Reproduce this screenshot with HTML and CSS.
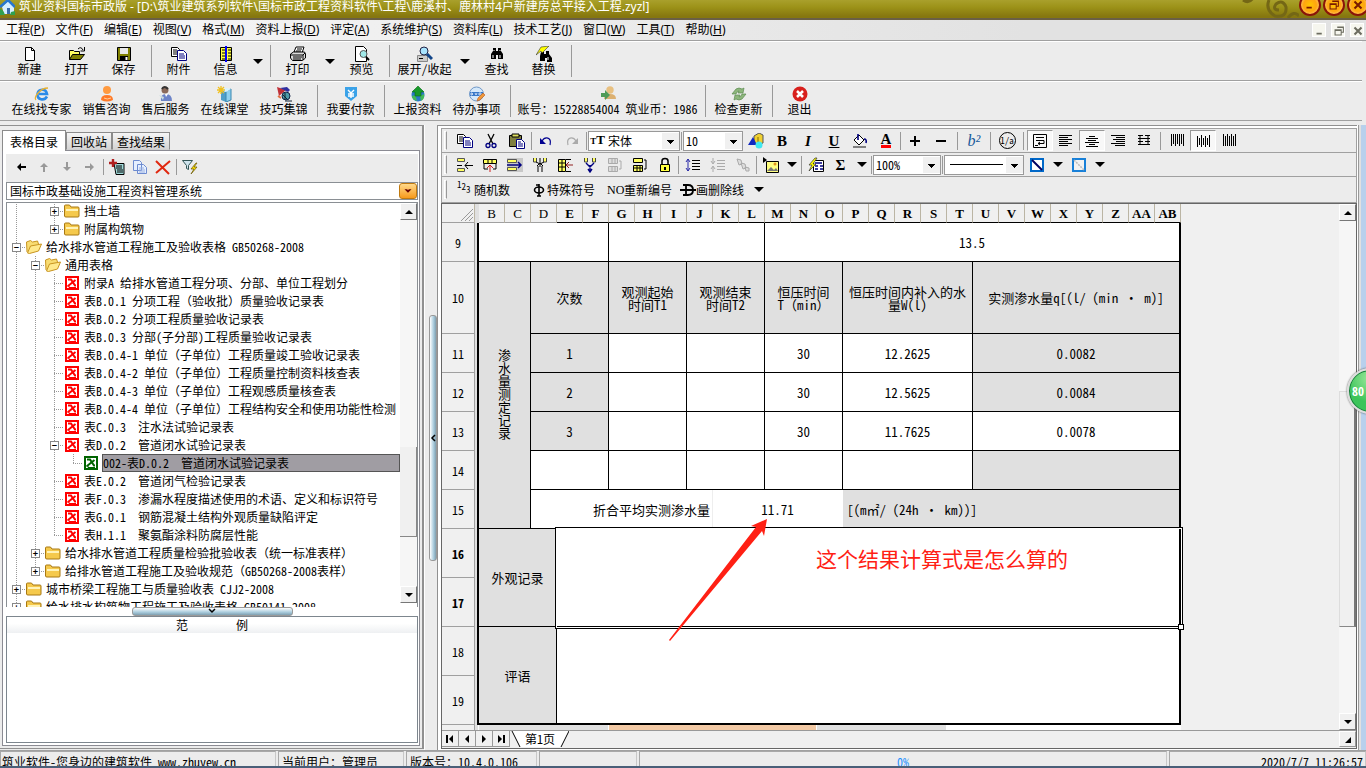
FILE: index.html
```html
<!DOCTYPE html>
<html lang="zh-CN">
<head>
<meta charset="utf-8">
<title>筑业资料国标市政版</title>
<link rel="stylesheet" href="styles.css">
</head>
<body>
<svg class="defs" aria-hidden="true">
  <symbol id="doc" viewBox="0 0 16 16"><path d="M3.5 1.5h6l3 3v10h-9z" fill="#fff" stroke="#000"/><path d="M9.5 1.5v3h3" fill="none" stroke="#000"/></symbol>
  <symbol id="open" viewBox="0 0 16 16"><path d="M.5 13.500V4.500h4l1 1h5v3" fill="#ffff60" stroke="#000"/><path d="M.5 13.500l3-5h12l-4 5z" fill="#808000" stroke="#000"/><path d="M9 3q3-3 5 1M15.500 1v4h-4" fill="none" stroke="#000"/></symbol>
  <symbol id="save" viewBox="0 0 16 16"><path d="M1.500 1.500h13v13h-13z" fill="#808000" stroke="#000"/><path d="M4 2h8v6H4z" fill="#e8e8e8"/><path d="M4 10h8v5H4z" fill="#000"/><path d="M9.500 11h2v3h-2z" fill="#fff"/></symbol>
  <symbol id="copy" viewBox="0 0 16 16"><path d="M.5 1.500h6l2 2v7h-8z" fill="#fff" stroke="#000"/><path d="M2 4h4M2 6h4M2 8h4" stroke="#000"/><path d="M6.500 4.500h6l3 3v7h-9z" fill="#fff" stroke="#000080"/><path d="M8 8h5M8 10h6M8 12h6" stroke="#000080"/></symbol>
  <symbol id="book" viewBox="0 0 16 16"><path d="M2.500 1.500h11v13h-11z" fill="#ffff40" stroke="#000"/><path d="M4 4h3M4 7h3M4 10h3M4 13h3M10 4h3M10 7h3M10 10h3M10 13h3" stroke="#000"/><path d="M7 0h2v16H7z" fill="#00f"/></symbol>
  <symbol id="print" viewBox="0 0 16 16"><path d="M4 6l2-5h8l-2 6z" fill="#fff" stroke="#000"/><path d="M7 3h5M6 5h5" stroke="#000"/><path d="M.5 8l3-2h11l1 2v4l-3 2.500h-10L.5 12z" fill="#ddd" stroke="#000"/><path d="M1 9h12M3 11h9M3 13h8M13 9l2-2M13 14V9" stroke="#000" fill="none"/></symbol>
  <symbol id="preview" viewBox="0 0 16 16"><path d="M1.500.5h8l3 3v12h-11z" fill="#fff" stroke="#000"/><circle cx="9.500" cy="8" r="3.500" fill="#a0e8e8" stroke="#555"/><path d="M12 11l3 3" stroke="#000" stroke-width="2"/></symbol>
  <symbol id="zoom" viewBox="0 0 16 16"><path d="M.5 9.500h10v6H.5z" fill="#ccc" stroke="#888"/><path d="M2 12.500h4" stroke="#000"/><circle cx="7" cy="5" r="4" fill="#a8e4ff" stroke="#224"/><path d="M10 8l5 5" stroke="#114488" stroke-width="3"/></symbol>
  <symbol id="find" viewBox="0 0 16 16"><path d="M4 2h3v3h2V2h3v3l2 3v5H9V9H7v4H2V8l2-3z"/><path d="M4 9v3M11 9v3M5 4v1M11 4v1" stroke="#fff"/></symbol>
  <symbol id="swap" viewBox="0 0 16 16"><path d="M5 6h3v2h2V5h3v3l3 4v4h-5v-4H9v3H4v-5z"/><path d="M13 0L5 1 0 9l5-4 1 2z" fill="#ffff00" stroke="#333" stroke-width=".6"/><path d="M12 11v3" stroke="#fff"/></symbol>
  <symbol id="ie" viewBox="0 0 16 16"><path d="M13 10.500c-3 5-10 3-9.500-2.500S12 2 13 8H5" fill="none" stroke="#2b8be8" stroke-width="2.600"/><path d="M2 14c-3-2 4-12 12-12" fill="none" stroke="#e8b030" stroke-width="1.300"/></symbol>
  <symbol id="person" viewBox="0 0 16 16"><circle cx="8" cy="4" r="4" fill="#ff9a40"/><path d="M2 14q0-5 6-5t6 5q-6 3-12 0z" fill="#ff7a28"/><path d="M5 12q3 2 7 0" stroke="#ffd0a0" fill="none"/></symbol>
  <symbol id="service" viewBox="0 0 16 16"><circle cx="7" cy="4" r="3.500" fill="#8b6a5a"/><path d="M4 3q2-4 6 0" stroke="#333" stroke-width="2" fill="none"/><path d="M3 15q-1-7 5-7t6 7z" fill="#6d84c8"/><path d="M1 9l5 2-1 3" fill="#cdd"/><path d="M7 8l1 3 2-3z" fill="#fff"/></symbol>
  <symbol id="class" viewBox="0 0 16 16"><path d="M4 4l5 2v10l-5-2z" fill="#4f9fc8"/><path d="M9 5l5-2v11l-5 2z" fill="#8fd0ee" stroke="#3887b0"/><path d="M4 4l5-2 5 1-5 3z" fill="#d8f3ff"/><path d="M4 0v8M0 4h8M1 1l6 6M7 1L1 7" stroke="#f0c020" stroke-width="1.300"/></symbol>
  <symbol id="tips" viewBox="0 0 16 16"><path d="M1 1l9 3-7 6z" fill="#c03038"/><path d="M4 2l8 4 2-2-3-3z" fill="#3030a0"/><circle cx="10" cy="10" r="4" fill="#4b9ba8" stroke="#124"/><path d="M7 9l4 4M9 7v7M9 15h7" stroke="#123"/><path d="M2 10l3 2" stroke="#e07040" stroke-width="2"/></symbol>
  <symbol id="pay" viewBox="0 0 16 16"><path d="M2 1h12v9l-6 5-6-5z" fill="#3aa2e8"/><path d="M5 4l3 3 3-3M8 7v5M5 8h6M5 10h6" stroke="#fff" stroke-width="1.400" fill="none"/></symbol>
  <symbol id="report" viewBox="0 0 16 16"><circle cx="8" cy="9" r="6.500" fill="#2877c8"/><path d="M2 10q4-2 5 5-5-1-5-5zM10 10l4-2q1 5-3 7z" fill="#40b858"/><path d="M8 0l6 6h-3v4H5V6H2z" fill="#18992c" stroke="#087010" stroke-width=".6"/></symbol>
  <symbol id="todo" viewBox="0 0 16 16"><circle cx="7.500" cy="8" r="7" fill="#d4e8fa" stroke="#7098c8"/><path d="M1 6h13v4H1z" fill="#3878c8"/><path d="M2 7v2h1l1-1-1-1zM6 7l1 2 1-2M10 7h2v2h-2z" stroke="#fff" fill="none" stroke-width=".7"/><path d="M8 15l1-3 5-5 2 2-5 5z" fill="#f09838" stroke="#b85a20" stroke-width=".6"/></symbol>
  <symbol id="account" viewBox="0 0 16 16"><circle cx="10" cy="4" r="3.700" fill="#e8c080"/><path d="M4 13q0-5 6-5t6 5z" fill="#dcb070"/><path d="M1 7h4V4l5 5-5 5v-3H1z" fill="#4f9b58"/></symbol>
  <symbol id="update" viewBox="0 0 16 16"><path d="M1 8l4-5q3-2 6 0l2-1-1 5H7l1-2q-2 0-3 3zM15 8l-4 5q-3 2-6 0l-2 1 1-5h5l-1 2q2 0 3-3z" fill="#8db67c" stroke="#5c8b50" stroke-width=".7"/></symbol>
  <symbol id="exit" viewBox="0 0 16 16"><circle cx="8" cy="8" r="7.500" fill="#d8201c"/><path d="M5 5l6 6M11 5l-6 6" stroke="#fff" stroke-width="2.500"/></symbol>
  <symbol id="folder" viewBox="0 0 16 16"><path d="M.5 13V3q0-1 1-1h4l1.500 2H14q1 0 1 1v8q0 1-1 1H2q-1.500 0-1.500-1z" fill="#f5c94c" stroke="#a87813"/><path d="M2 7h12" stroke="#fff3b8" stroke-width="2"/></symbol>
  <symbol id="fopen" viewBox="0 0 16 16"><path d="M1 13L.5 3l4-1.500 2 1.500 5-1 1 3" fill="#f8dc72" stroke="#c89420"/><path d="M1.500 14l3-7L15.500 5l-3 7-9 2.500z" fill="#ffe98c" stroke="#c89420"/></symbol>
  <symbol id="xred" viewBox="0 0 14 14"><path d="M0 0h14v14H0z" fill="#f00"/><path d="M2 2h10v10H2z" fill="#fff"/><path d="M3 3.500h3l4 6h1M10.500 4L3 10" stroke="#f00" stroke-width="2" fill="none"/><path d="M2 10h2v1.500h7" stroke="#f00" fill="none"/></symbol>
  <symbol id="xgreen" viewBox="0 0 14 14"><path d="M0 0h14v14H0z" fill="#006400"/><path d="M2 2h10v10H2z" fill="#fff"/><path d="M3 3.500h3l4 6h1M10.500 4L3 10" stroke="#006400" stroke-width="2" fill="none"/><path d="M2 10h2v1.500h7" stroke="#006400" fill="none"/></symbol>
  <symbol id="arrow" viewBox="0 0 16 16"><path d="M4 8l4-4v3h5v2H8v3z"/></symbol>
  <symbol id="addrow" viewBox="0 0 16 16"><path d="M5 4.500h10v11H7z" fill="#9fd8d8" stroke="#000"/><path d="M7 7h6M7 9h6M8 11h6M8 13h6" stroke="#000"/><path d="M4 0v8M0 4h8" stroke="#b02020" stroke-width="2.400"/></symbol>
  <symbol id="pages" viewBox="0 0 16 16"><path d="M1.500 1.500h6l2 2v8h-8zM5.500 5.500h6l3 3v6h-9z" fill="#e5efff" stroke="#6d8bd0"/><path d="M7 9h5M7 11h6M7 13h6" stroke="#9ab0e0"/></symbol>
  <symbol id="del" viewBox="0 0 16 16"><path d="M1 2l13 13M15 2L1 14" stroke="#e02810" stroke-width="2"/></symbol>
  <symbol id="filter" viewBox="0 0 16 16"><path d="M.5 1.500h10l-4 5v4l-2-1v-3z" fill="#cfe4ee" stroke="#355"/><path d="M14 4l-5 6h3l-3 5 6-7h-3l3-4z" fill="#ffe000" stroke="#665500" stroke-width=".7"/></symbol>
  <symbol id="cut" viewBox="0 0 16 16"><path d="M5 1l5 10M11 1L6 11" stroke="#000" stroke-width="1.300"/><circle cx="5" cy="12.500" r="2" fill="none" stroke="#000080" stroke-width="1.300"/><circle cx="11" cy="12.500" r="2" fill="none" stroke="#000080" stroke-width="1.300"/></symbol>
  <symbol id="paste" viewBox="0 0 16 16"><path d="M.5 2.500h12v11H.5z" fill="#808040" stroke="#000"/><path d="M3 1h7v3H3z" fill="#e0e060" stroke="#000"/><path d="M7.500 6.500h5l3 3v6h-8z" fill="#fff" stroke="#000080"/><path d="M9 9h3M9 11h5M9 13h5" stroke="#000080"/></symbol>
  <symbol id="undo" viewBox="0 0 16 16"><path d="M4 8c3-5 10-4 8 4" fill="none" stroke="#000090" stroke-width="1.200"/><path d="M2 5v6h6z" fill="#000090"/></symbol>
  <symbol id="redo" viewBox="0 0 16 16"><path d="M12 8C9 3 2 4 4 12" fill="none" stroke="#aaa" stroke-width="1.200"/><path d="M14 5v6H8z" fill="#aaa"/></symbol>
  <symbol id="shapes" viewBox="0 0 16 16"><path d="M6 3l5-3 4 2v8l-5 2-4-2z" fill="#f0d030" stroke="#555"/><path d="M10 4v8" stroke="#877000"/><path d="M0 12l5-8 4 8z" fill="#1028c0"/><circle cx="11" cy="12" r="3.500" fill="#40e8f0"/></symbol>
  <symbol id="fill" viewBox="0 0 16 16"><path d="M2 7l5-5 5 5-5 5z" fill="#fff" stroke="#000"/><path d="M6 7V1M12 6q3 0 2 4" stroke="#000080" stroke-width="1.600" fill="none"/><path d="M1 13h13v2H1z" fill="#808080"/></symbol>
  <symbol id="plus" viewBox="0 0 16 16"><path d="M8 3v10M3 8h10" stroke="#000" stroke-width="2"/></symbol>
  <symbol id="minus" viewBox="0 0 16 16"><path d="M3 8h10" stroke="#000" stroke-width="2"/></symbol>
  <symbol id="wrap" viewBox="0 0 16 16"><path d="M1.500 1.500h13v13h-13z" fill="none" stroke="#000"/><path d="M4 4.500h8M4 7.500h8v3H6M8 9l-2 1.500L8 12M3 12.500h3" fill="none" stroke="#000"/></symbol>
  <symbol id="al" viewBox="0 0 16 16"><path d="M1 2.500h13M1 4.500h9M1 6.500h13M1 8.500h9M1 10.500h13M1 12.500h9" stroke="#000"/></symbol>
  <symbol id="ac" viewBox="0 0 16 16"><path d="M5 3.500h6M2 5.500h12M4 7.500h8M1 9.500h14M5 11.500h6M2 13.500h12" stroke="#000"/></symbol>
  <symbol id="ar" viewBox="0 0 16 16"><path d="M1 2.500h14M6 4.500h9M3 6.500h12M6 8.500h9M1 10.500h14M5 12.500h10" stroke="#000"/></symbol>
  <symbol id="aj" viewBox="0 0 16 16"><path d="M2 2.500h5M9 2.500h5M2 5.500h12M2 8.500h5M9 8.500h5M2 11.500h12M4 3v8M12 3v8" stroke="#000"/></symbol>
  <symbol id="vt" viewBox="0 0 16 16"><path d="M2.500 1v12M4.500 1v10M6.500 1v12M8.500 1v10M10.500 1v12M12.500 1v10M14.500 1v12" stroke="#000"/></symbol>
  <symbol id="vm" viewBox="0 0 16 16"><path d="M2.500 3v11M4.500 5v7M6.500 2v12M8.500 5v7M10.500 3v11M12.500 5v7M14.500 2v12" stroke="#000"/></symbol>
  <symbol id="vb" viewBox="0 0 16 16"><path d="M2.500 1v12M4.500 3v10M6.500 1v12M8.500 3v10M10.500 1v12M12.500 3v10M14.500 1v12" stroke="#000"/></symbol>
  <symbol id="insrow" viewBox="0 0 16 16"><path d="M.5 1.500h7v3h-7zM.5 11.500h7v3h-7z" fill="#ffff60" stroke="#555"/><path d="M0 8.500h5M8 8.500h8M11 5L8 8.500 11 12" stroke="#000" fill="none"/></symbol>
  <symbol id="inscol" viewBox="0 0 16 16"><path d="M1.500 2.500h13v4h-13z" fill="#ffff60" stroke="#000"/><path d="M6 3v3M10 3v3M2 7v5h4M14 7v5h-3" stroke="#000" fill="none"/><path d="M8 8v7M5 11l3-3 3 3" stroke="#d02020" fill="none"/></symbol>
  <symbol id="approw" viewBox="0 0 16 16"><path d="M0 1h16v14H0z" fill="#c8c8c8"/><path d="M.5 2.500h9v3h-9zM.5 10.500h9v3h-9z" fill="#ffff60" stroke="#555"/><path d="M0 8h13M11 5l3 3-3 3" stroke="#000080" stroke-width="1.500" fill="none"/></symbol>
  <symbol id="split" viewBox="0 0 16 16"><path d="M1.500 1v4h3V1M11.500 1v4h3V1" fill="#ffff60" stroke="#444"/><path d="M8 1v9M4 5l4 2 4-2M5 9l3-3 3 3M6 9v6M10 9v6" stroke="#000" fill="none"/></symbol>
  <symbol id="delrow" viewBox="0 0 16 16"><path d="M1.500 2.500h7v12h-7z" fill="#ffff60" stroke="#000"/><path d="M5 3v11M2 6h6M2 10h6M9 2.500h5M9 14.500h5" stroke="#000"/><path d="M9 8h7M12 5L9 8l3 3" stroke="#902020" fill="none"/></symbol>
  <symbol id="merge" viewBox="0 0 16 16"><path d="M2.500 1v4h3V1M10.500 1v4h3V1" fill="#ffff60" stroke="#444"/><path d="M4 6l4 4 4-4M8 8v7M6 12l2 3 2-3" stroke="#000080" fill="none" stroke-width="1.400"/></symbol>
  <symbol id="gridg" viewBox="0 0 16 16"><path d="M1.500 1.500h9v5h-9zM1.500 9.500h9v5h-9z" fill="#ddd" stroke="#aaa"/><path d="M5 2v4M8 2v4M5 10v4M8 10v4M12 4h2v8h-2" stroke="#aaa" fill="none"/></symbol>
  <symbol id="gridy" viewBox="0 0 16 16"><path d="M1.500 1.500h9v4h-9zM1.500 8.500h9v6h-9z" fill="#ffff60" stroke="#000"/><path d="M5 9v5M8 9v5M2 11h9M12 3h2v9h-2" stroke="#000" fill="none"/></symbol>
  <symbol id="lock" viewBox="0 0 16 16"><path d="M5 7V4q0-2.500 3-2.500T11 4v3" fill="none" stroke="#000" stroke-width="1.500"/><path d="M3.500 7.500h9v7h-9z" fill="#ffff40" stroke="#000"/><path d="M8 10v3" stroke="#000" stroke-width="2"/></symbol>
  <symbol id="linesp" viewBox="0 0 16 16"><path d="M7 3.500h8M7 6.500h8M7 9.500h8M7 12.500h8" stroke="#000"/><path d="M3 2v12M1 5l2-3 2 3M1 11l2 3 2-3" stroke="#2828a8" fill="none"/></symbol>
  <symbol id="linesg" viewBox="0 0 16 16"><path d="M7 3.500h8M7 6.500h8M7 9.500h8M7 12.500h8M3 1v5M1 4l2 3 2-3M3 15v-5M1 12l2-3 2 3" stroke="#aaa" fill="none"/></symbol>
  <symbol id="link" viewBox="0 0 16 16"><path d="M2 2l4 1 1 4-3 1zM6 6l4 1 1 4-3 1zM10 10l4 1v3h-3z" fill="#ddd" stroke="#aaa"/></symbol>
  <symbol id="image" viewBox="0 0 16 16"><path d="M3.500 4.500h12v11h-12z" fill="#ffff80" stroke="#000"/><path d="M4 14l4-4 3 3 2-2 2 3z" fill="#777"/><circle cx="12" cy="7" r="1.500" fill="#e09020"/><path d="M0 0l4 3-4 3z"/></symbol>
  <symbol id="calc" viewBox="0 0 16 16"><path d="M5.500 3.500h10v11h-10z" fill="#fff" stroke="#000"/><path d="M7 6h7M7 9h3M12 9h3M7 12h3M12 12h3" stroke="#000080" stroke-width="1.500"/><path d="M7 1L1 8h3l-3 6 7-7H5l4-6z" fill="#ff0" stroke="#333" stroke-width=".7"/></symbol>
  <symbol id="bord" viewBox="0 0 16 16"><path d="M2 2h12v12H2z" fill="#fff" stroke="#0068c8" stroke-width="2"/><path d="M3 3l10 10" stroke="#000060" stroke-width="2"/></symbol>
  <symbol id="bordl" viewBox="0 0 16 16"><path d="M2 2h12v12H2z" fill="#f2f2f2" stroke="#1880d8" stroke-width="2"/><path d="M3 3l10 10" stroke="#bbb" stroke-width="1.500" stroke-dasharray="2 1"/></symbol>
  <symbol id="spec" viewBox="0 0 16 16"><ellipse cx="8" cy="8" rx="4.500" ry="3" fill="none" stroke="#000" stroke-width="1.600"/><path d="M8 2v12M5 3h3M6 14h4" stroke="#000" stroke-width="1.600"/></symbol>
  <symbol id="strike" viewBox="0 0 16 16"><path d="M3 3h5q5 0 5 5t-5 5H3M6 3v10M0 8h16" fill="none" stroke="#000" stroke-width="1.800"/></symbol>
  <symbol id="wmin" viewBox="0 0 16 16"><path d="M4 11h6" stroke="currentColor" stroke-width="2"/></symbol>
  <symbol id="wres" viewBox="0 0 16 16"><path d="M3.500 6.500h7v6h-7zM6 3.500h7v6h-2M3 7.500h8M6 4h7" fill="none" stroke="currentColor" stroke-width="1.200"/></symbol>
  <symbol id="wclose" viewBox="0 0 16 16"><path d="M4 4l8 8M12 4l-8 8" stroke="currentColor" stroke-width="2.400"/></symbol>
</svg>

<header class="title">
  <svg class="logo" viewBox="0 0 16 16"><path d="M3 7l6-6 6 6v7H5z" fill="#d8f0ff"/><path d="M1 7l8-7 7 7" fill="none" stroke="#2878d0" stroke-width="2.500"/><path d="M8 8h3v6H8z" fill="#3a6ca8"/><path d="M0 9q4 0 6 6H0zM12 12l4-1v4h-5z" fill="#30a050"/></svg>
  <h1>筑业资料国标市政版 - [D:\筑业建筑系列软件\国标市政工程资料软件\工程\鹿溪村、鹿林村4户新建房总平接入工程.zyzl]</h1>
  <svg class="curl" viewBox="0 0 60 20"><path d="M4 0q6 4 10-2M30 0q-4 10 6 16q12 2 11-9q-3-8-10-3q-4 6 3 6M49 18q6-8 11-2" fill="none" stroke="#746715" stroke-width="3"/></svg>
  <div class="orbs"><button aria-label="最小化"><svg><use href="#wmin"/></svg></button><button aria-label="还原"><svg><use href="#wres"/></svg></button><button aria-label="关闭"><svg><use href="#wclose"/></svg></button></div>
</header>

<nav class="menu">
  <button>工程(<u>P</u>)</button><button>文件(<u>F</u>)</button><button>编辑(<u>E</u>)</button><button>视图(<u>V</u>)</button><button>格式(<u>M</u>)</button><button>资料上报(<u>D</u>)</button><button>评定(<u>A</u>)</button><button>系统维护(<u>S</u>)</button><button>资料库(<u>L</u>)</button><button>技术工艺(<u>J</u>)</button><button>窗口(<u>W</u>)</button><button>工具(<u>T</u>)</button><button>帮助(<u>H</u>)</button>
  <div class="mdi"><button aria-label="最小化窗口"><svg><use href="#wmin"/></svg></button><button aria-label="还原窗口"><svg><use href="#wres"/></svg></button><button aria-label="关闭窗口"><svg><use href="#wclose"/></svg></button></div>
</nav>

<div class="bar">
  <button class="big"><svg><use href="#doc"/></svg>新建</button><button class="big"><svg><use href="#open"/></svg>打开</button><button class="big"><svg><use href="#save"/></svg>保存</button><i class="sep"></i>
  <button class="big"><svg><use href="#copy"/></svg>附件</button><button class="big"><svg><use href="#book"/></svg>信息</button><button class="drop" aria-label="信息选项"></button><i class="sep"></i>
  <button class="big"><svg><use href="#print"/></svg>打印</button><button class="drop" aria-label="打印选项"></button><button class="big"><svg><use href="#preview"/></svg>预览</button><i class="sep"></i>
  <button class="big mid"><svg><use href="#zoom"/></svg>展开/收起</button><button class="drop" aria-label="展开选项"></button><button class="big"><svg><use href="#find"/></svg>查找</button><button class="big"><svg><use href="#swap"/></svg>替换</button><i class="sep"></i>
</div>
<div class="bar two">
  <button class="big five"><svg><use href="#ie"/></svg>在线找专家</button><button class="big four"><svg><use href="#person"/></svg>销售咨询</button><button class="big four"><svg><use href="#service"/></svg>售后服务</button><button class="big four"><svg><use href="#class"/></svg>在线课堂</button><button class="big four"><svg><use href="#tips"/></svg>技巧集锦</button><i class="sep"></i>
  <button class="big four"><svg><use href="#pay"/></svg>我要付款</button><i class="sep"></i>
  <button class="big four"><svg><use href="#report"/></svg>上报资料</button><button class="big four"><svg><use href="#todo"/></svg>待办事项</button><i class="sep"></i>
  <button class="big acct"><svg><use href="#account"/></svg>账号：15228854004 筑业币：1986</button><i class="sep"></i>
  <button class="big four"><svg><use href="#update"/></svg>检查更新</button><i class="sep"></i>
  <button class="big"><svg><use href="#exit"/></svg>退出</button>
</div>

<main class="work">
  <aside class="left">
    <div class="tabs"><button class="on">表格目录</button><button>回收站</button><button>查找结果</button></div>
    <div class="pane">
      <div class="tools">
        <button aria-label="后退"><svg><use href="#arrow"/></svg></button><button class="dim up" aria-label="上移"><svg><use href="#arrow"/></svg></button><button class="dim down" aria-label="下移"><svg><use href="#arrow"/></svg></button><button class="dim fwd" aria-label="前进"><svg><use href="#arrow"/></svg></button><i class="sep"></i>
        <button aria-label="添加"><svg><use href="#addrow"/></svg></button><button aria-label="复制表格"><svg><use href="#pages"/></svg></button><button aria-label="删除"><svg><use href="#del"/></svg></button><i class="sep"></i><button aria-label="筛选"><svg><use href="#filter"/></svg></button>
      </div>
      <div class="system"><select aria-label="资料系统"><option>国标市政基础设施工程资料管理系统</option></select><span class="chev"><svg viewBox="0 0 16 16"><path d="M4 6h3l1 1 1-1h3l-4 4z" fill="#600"/></svg></span></div>
      <div class="treebox">
        <ul class="tree">
          <li><i class="v"></i><i></i><i class="t"><b>+</b></i><svg><use href="#folder"/></svg><span>挡土墙</span></li>
          <li><i class="v"></i><i></i><i class="l"><b>+</b></i><svg><use href="#folder"/></svg><span>附属构筑物</span></li>
          <li><i class="t"><b>−</b></i><svg><use href="#fopen"/></svg><span>给水排水管道工程施工及验收表格 GB50268-2008</span></li>
          <li><i class="v"></i><i class="t"><b>−</b></i><svg><use href="#fopen"/></svg><span>通用表格</span></li>
          <li><i class="v"></i><i class="v"></i><i class="t"></i><svg class="x"><use href="#xred"/></svg><span>附录A 给排水管道工程分项、分部、单位工程划分</span></li>
          <li><i class="v"></i><i class="v"></i><i class="t"></i><svg class="x"><use href="#xred"/></svg><span>表B.0.1 分项工程<em>（</em>验收批<em>）</em>质量验收记录表</span></li>
          <li><i class="v"></i><i class="v"></i><i class="t"></i><svg class="x"><use href="#xred"/></svg><span>表B.0.2 分项工程质量验收记录表</span></li>
          <li><i class="v"></i><i class="v"></i><i class="t"></i><svg class="x"><use href="#xred"/></svg><span>表B.0.3 分部(子分部)工程质量验收记录表</span></li>
          <li><i class="v"></i><i class="v"></i><i class="t"></i><svg class="x"><use href="#xred"/></svg><span>表B.0.4-1 单位<em>（</em>子单位<em>）</em>工程质量竣工验收记录表</span></li>
          <li><i class="v"></i><i class="v"></i><i class="t"></i><svg class="x"><use href="#xred"/></svg><span>表B.0.4-2 单位<em>（</em>子单位<em>）</em>工程质量控制资料核查表</span></li>
          <li><i class="v"></i><i class="v"></i><i class="t"></i><svg class="x"><use href="#xred"/></svg><span>表B.0.4-3 单位<em>（</em>子单位<em>）</em>工程观感质量核查表</span></li>
          <li><i class="v"></i><i class="v"></i><i class="t"></i><svg class="x"><use href="#xred"/></svg><span>表B.0.4-4 单位<em>（</em>子单位<em>）</em>工程结构安全和使用功能性检测</span></li>
          <li><i class="v"></i><i class="v"></i><i class="t"></i><svg class="x"><use href="#xred"/></svg><span>表C.0.3<em>　</em>注水法试验记录表</span></li>
          <li><i class="v"></i><i class="v"></i><i class="t"><b>−</b></i><svg class="x"><use href="#xred"/></svg><span>表D.0.2<em>　</em>管道闭水试验记录表</span></li>
          <li class="sel"><i class="v"></i><i class="v"></i><i class="v"></i><i class="l"></i><svg class="x"><use href="#xgreen"/></svg><span>002-表D.0.2<em>　</em>管道闭水试验记录表</span></li>
          <li><i class="v"></i><i class="v"></i><i class="t"></i><svg class="x"><use href="#xred"/></svg><span>表E.0.2<em>　</em>管道闭气检验记录表</span></li>
          <li><i class="v"></i><i class="v"></i><i class="t"></i><svg class="x"><use href="#xred"/></svg><span>表F.0.3<em>　</em>渗漏水程度描述使用的术语、定义和标识符号</span></li>
          <li><i class="v"></i><i class="v"></i><i class="t"></i><svg class="x"><use href="#xred"/></svg><span>表G.0.1<em>　</em>钢筋混凝土结构外观质量缺陷评定</span></li>
          <li><i class="v"></i><i class="v"></i><i class="l"></i><svg class="x"><use href="#xred"/></svg><span>表H.1.1<em>　</em>聚氨酯涂料防腐层性能</span></li>
          <li><i class="v"></i><i class="t"><b>+</b></i><svg><use href="#folder"/></svg><span>给水排水管道工程质量检验批验收表<em>（</em>统一标准表样<em>）</em></span></li>
          <li><i class="v"></i><i class="l"><b>+</b></i><svg><use href="#folder"/></svg><span>给排水管道工程施工及验收规范<em>（</em>GB50268-2008表样<em>）</em></span></li>
          <li><i class="t"><b>+</b></i><svg><use href="#folder"/></svg><span>城市桥梁工程施工与质量验收表 CJJ2-2008</span></li>
          <li><i class="t"><b>+</b></i><svg><use href="#folder"/></svg><span>给水排水构筑物工程施工及验收表格 GB50141-2008</span></li>
        </ul>
        <div class="scroll"><button class="su" aria-label="向上滚动"></button><i class="before"></i><i class="thumb"></i><i class="after"></i><button class="sd" aria-label="向下滚动"></button></div>
      </div>
      <div class="hsplit"><i><svg viewBox="0 0 8 6"><path d="M1 1l3 3 3-3" fill="none" stroke="#000" stroke-width="1.500"/></svg></i></div>
      <section class="example"><h2><span>范</span><span>例</span></h2></section>
    </div>
  </aside>
  <div class="vsplit"><i><svg viewBox="0 0 6 8"><path d="M5 1L2 4l3 3" fill="none" stroke="#000" stroke-width="1.500"/></svg></i></div>
  <section class="right">
    <div class="rows">
      <div class="row a">
        <i class="grip"></i>
        <button aria-label="复制"><svg><use href="#copy"/></svg></button><button aria-label="剪切"><svg><use href="#cut"/></svg></button><button aria-label="粘贴"><svg><use href="#paste"/></svg></button><i class="sep s"></i>
        <button aria-label="撤销"><svg><use href="#undo"/></svg></button><button aria-label="重做"><svg><use href="#redo"/></svg></button><i class="sep s"></i>
        <div class="combo font"><b class="tt"><small>T</small>T</b><select aria-label="字体"><option>宋体</option></select></div><i class="sep s"></i>
        <div class="combo size"><select aria-label="字号"><option>10</option></select></div>
        <button aria-label="样式"><svg><use href="#shapes"/></svg></button><button class="tx"><b>B</b></button><button class="tx"><em>I</em></button><button class="tx"><u>U</u></button><button aria-label="填充颜色"><svg><use href="#fill"/></svg></button><button class="tx"><b class="fc">A</b></button><i class="sep s"></i>
        <button aria-label="增大"><svg><use href="#plus"/></svg></button><button aria-label="减小"><svg><use href="#minus"/></svg></button><i class="sep"></i>
        <button class="sup"><em>b²</em></button><i class="sep"></i><button class="frac"><span>1/a</span></button><i class="sep"></i>
        <button class="on" aria-label="自动换行"><svg><use href="#wrap"/></svg></button><button aria-label="左对齐"><svg><use href="#al"/></svg></button><button class="on" aria-label="居中"><svg><use href="#ac"/></svg></button><button aria-label="右对齐"><svg><use href="#ar"/></svg></button><button aria-label="两端对齐"><svg><use href="#aj"/></svg></button><i class="sep"></i>
        <button aria-label="顶端对齐"><svg><use href="#vt"/></svg></button><button class="on" aria-label="垂直居中"><svg><use href="#vm"/></svg></button><button aria-label="底端对齐"><svg><use href="#vb"/></svg></button>
      </div>
      <div class="row b">
        <i class="grip"></i>
        <button aria-label="插入行"><svg><use href="#insrow"/></svg></button><button aria-label="插入列"><svg><use href="#inscol"/></svg></button><button aria-label="追加行"><svg><use href="#approw"/></svg></button><button aria-label="拆分"><svg><use href="#split"/></svg></button><button aria-label="删除行"><svg><use href="#delrow"/></svg></button><button aria-label="合并"><svg><use href="#merge"/></svg></button><button aria-label="拆分表格"><svg><use href="#gridg"/></svg></button><button aria-label="合并表格"><svg><use href="#gridy"/></svg></button><button aria-label="锁定"><svg><use href="#lock"/></svg></button><i class="sep s"></i>
        <button aria-label="增加行距"><svg><use href="#linesp"/></svg></button><button aria-label="减少行距"><svg><use href="#linesg"/></svg></button><button aria-label="链接"><svg><use href="#link"/></svg></button><i class="sep s"></i>
        <button aria-label="图片"><svg><use href="#image"/></svg></button><button class="drop" aria-label="图片选项"></button><i class="sep s"></i>
        <button aria-label="计算"><svg><use href="#calc"/></svg></button><button class="tx">Σ</button><button class="drop" aria-label="求和选项"></button><i class="sep s"></i>
        <div class="combo pct"><select aria-label="缩放"><option>100%</option></select></div><i class="sep s"></i>
        <div class="combo line"><select aria-label="线型"><option></option></select></div>
        <button aria-label="边框"><svg><use href="#bord"/></svg></button><button class="drop" aria-label="边框选项"></button><button aria-label="无边框"><svg><use href="#bordl"/></svg></button><button class="drop" aria-label="无边框选项"></button>
      </div>
      <div class="row c">
        <i class="grip"></i>
        <button class="w1"><span class="nums"><sup>1</sup><span>2</span><sub>3</sub></span>随机数</button><button class="w2"><svg><use href="#spec"/></svg>特殊符号</button><button class="w3"><span class="no">NO</span>重新编号</button><button class="w4"><svg><use href="#strike"/></svg>画删除线</button><button class="drop" aria-label="删除线选项"></button>
      </div>
    </div>
    <div class="book">
      <div class="sheetrow">
        <div class="sheet">
          <table>
            <colgroup><col class="rh"><col class="gap"><col span="27" class="c"></colgroup>
            <thead><tr><th class="corner"><svg viewBox="0 0 12 12"><path d="M0 12L12 0M4 12l8-8M8 12l4-4" stroke="#999"/></svg></th><th class="gp"></th><th>B</th><th>C</th><th>D</th><th class="k">E</th><th class="k">F</th><th class="k">G</th><th class="k">H</th><th class="k">I</th><th class="k">J</th><th class="k">K</th><th class="k">L</th><th class="k">M</th><th class="k">N</th><th class="k">O</th><th class="k">P</th><th class="k">Q</th><th class="k">R</th><th class="k">S</th><th class="k">T</th><th class="k">U</th><th class="k">V</th><th class="k">W</th><th class="k">X</th><th class="k">Y</th><th class="k">Z</th><th class="k">AA</th><th class="k">AB</th></tr></thead>
            <tbody>
              <tr class="h39"><th>9</th><td class="edge" rowspan="11"></td><td colspan="5"></td><td colspan="6"></td><td colspan="16" class="last">13.5</td></tr>
              <tr class="h72"><th>10</th><td class="g" colspan="2" rowspan="6"><span class="vert">渗水量测定记录</span></td><td class="g" colspan="3">次数</td><td class="g" colspan="3">观测起始<br>时间T1</td><td class="g" colspan="3">观测结束<br>时间T2</td><td class="g" colspan="3">恒压时间<br>T<em>（</em>min<em>）</em></td><td class="g" colspan="5">恒压时间内补入的水<br>量W(l)</td><td class="g last" colspan="8">实测渗水量q[(l/ (min · m)]</td></tr>
              <tr class="h39"><th>11</th><td class="g" colspan="3">1</td><td colspan="3"></td><td colspan="3"></td><td colspan="3">30</td><td colspan="5">12.2625</td><td class="g last" colspan="8">0.0082</td></tr>
              <tr class="h39"><th>12</th><td class="g" colspan="3">2</td><td colspan="3"></td><td colspan="3"></td><td colspan="3">30</td><td colspan="5">12.5625</td><td class="g last" colspan="8">0.0084</td></tr>
              <tr class="h39"><th>13</th><td class="g" colspan="3">3</td><td colspan="3"></td><td colspan="3"></td><td colspan="3">30</td><td colspan="5">11.7625</td><td class="last" colspan="8">0.0078</td></tr>
              <tr class="h39"><th>14</th><td colspan="3"></td><td colspan="3"></td><td colspan="3"></td><td colspan="3"></td><td colspan="5"></td><td class="g last" colspan="8"></td></tr>
              <tr class="h39"><th>15</th><td class="avg" colspan="7">折合平均实测渗水量</td><td class="nb" colspan="5">11.71</td><td class="g last unit" colspan="13">[(m㎡/ (24h · km))]</td></tr>
              <tr class="h49"><th class="k">16</th><td class="g" colspan="3" rowspan="2">外观记录</td><td class="last cur" colspan="24" rowspan="2"></td></tr>
              <tr class="h49"><th class="k">17</th></tr>
              <tr class="h49"><th>18</th><td class="g end" colspan="3" rowspan="2">评语</td><td class="last end" colspan="24" rowspan="2"></td></tr>
              <tr class="h49"><th>19</th></tr>
              <tr class="foot"><th></th><td class="gp"></td><td class="f1" colspan="5"></td><td class="f2" colspan="8"></td><td class="f1" colspan="5"></td><td class="f3" colspan="9"></td></tr>
            </tbody>
          </table>
          <svg class="note" viewBox="0 0 100 124"><path d="M99 0L83 7l5 1L1 121l1 1L94 12l2 5z" fill="#ff2014"/></svg>
          <p class="ask">这个结果计算式是怎么算的</p>
          <i class="handle"></i>
        </div>
        <div class="scroll r"><button class="su" aria-label="向上滚动"></button><i class="before"></i><i class="thumb"></i><i class="after"></i><button class="sd" aria-label="向下滚动"></button></div>
      </div>
      <div class="pages">
        <button aria-label="首页"><svg viewBox="0 0 16 16"><path d="M5 4v8" stroke="#000" stroke-width="2"/><path d="M11 4v8L7 8z"/></svg></button><button aria-label="上一页"><svg viewBox="0 0 16 16"><path d="M10 4v8L6 8z"/></svg></button><button aria-label="下一页"><svg viewBox="0 0 16 16"><path d="M6 4v8l4-4z"/></svg></button><button aria-label="末页"><svg viewBox="0 0 16 16"><path d="M11 4v8" stroke="#000" stroke-width="2"/><path d="M5 4v8l4-4z"/></svg></button>
        <button class="ptab"><svg viewBox="0 0 58 17" preserveAspectRatio="none"><path d="M1 0l8 16h41l8-16z" fill="#fff"/><path d="M1 0l8 16M50 16l8-16" stroke="#000"/></svg><span>第1页</span></button>
        <button class="resize" aria-label="调整大小"><svg viewBox="0 0 16 16"><path d="M11 5v6H5z"/></svg></button>
      </div>
    </div>
  </section>
  <div class="frame"></div>
</main>

<footer class="status"><span class="s1">筑业软件-您身边的建筑软件 www.zhuyew.cn</span><span class="s2">当前用户：管理员</span><span class="s3">版本号：10.4.0.106</span><span class="s4"></span><span class="s5">0%</span><span class="s6">2020/7/7 11:26:57</span></footer>
<div class="ball">80</div>
</body>
</html>
```
FILE: styles.css
```css
* { box-sizing: border-box; font-feature-settings: inherit; }
body {
  margin: 0; height: 100vh; overflow: hidden; display: flex; flex-direction: column;
  background: #ececec; color: #000;
  font: 12px/16px "Noto Sans CJK SC", sans-serif; font-feature-settings: "hwid" 1;
}
button, select { font: inherit; color: inherit; border: 0; padding: 0; margin: 0; background: none; border-radius: 0; }
ul, h1, h2, p { margin: 0; padding: 0; font-size: 12px; font-weight: normal; list-style: none; }
i { font-style: normal; }
svg { display: block; width: 16px; height: 16px; flex: none; }
.defs { position: absolute; width: 0; height: 0; }
.tree em, td em { font-style: normal; font-feature-settings: normal; }

.title { height: 20px; flex: none; display: flex; align-items: flex-start; background: linear-gradient(#a9a02c, #9c9218 40%, #86770f 90%); border-bottom: 2px solid #6a5f45; color: #fff; overflow: hidden; font-feature-settings: normal; }
.title .logo { margin: 0 3px 0 -1px; }
.title h1 { flex: 1; line-height: 14px; white-space: nowrap; padding-left: 1px; font-family: "Noto Sans", "Noto Sans CJK SC", sans-serif; }
.title .curl { width: 60px; height: 20px; }
.orbs { display: flex; gap: 2px; margin-right: -3px; }
.orbs button { width: 22px; height: 22px; margin-top: -6px; border: 2px solid #8a1408; border-radius: 11px; background: radial-gradient(#ffc400, #ffa510 50%, #ffe0a0); color: #7a1a00; display: grid; place-items: center; }
.orbs svg, .mdi svg { width: 14px; height: 14px; }

.menu { height: 21px; flex: none; display: flex; gap: 11px; padding: 0 2px 0 6px; background: linear-gradient(90deg, #f8f8f8, #e2e2e2 75%); border-bottom: 1px solid #a0a0a0; white-space: nowrap; font-feature-settings: normal; }
.menu > button { font-family: "Noto Sans", "Noto Sans CJK SC", sans-serif; }
.mdi { margin-left: auto; display: flex; gap: 5px; align-items: center; }
.mdi button { width: 14px; height: 14px; background: #f6f6ee; border: 1px solid #fff; color: #6c6c60; display: grid; place-items: center; }

.bar { height: 40px; flex: none; display: flex; align-items: center; margin-right: 4px; padding-left: 6px; border-bottom: 1px solid #a0a0a0; border-top: 1px solid #fff; }
.big { width: 47px; display: flex; flex-direction: column; align-items: center; white-space: nowrap; line-height: 14px; }
.big.mid { width: 63px; } .big.four { width: 59px; } .big.five { width: 71px; } .big.acct { width: 187px; }
.sep { width: 8px; height: 32px; flex: none; background: linear-gradient(#999, #999) center / 1px 100% no-repeat; }
.drop { width: 17px; height: 16px; flex: none; }
.drop::before { content: ""; display: block; margin: auto; width: 0; border: 5px solid transparent; border-top-color: #000; border-bottom: 0; }

.work { flex: 1; min-height: 0; display: flex; margin-top: 4px; }
.left { width: 424px; flex: none; display: flex; flex-direction: column; margin-bottom: 1px; padding: 4px 2px 2px 2px; border: 1px solid #909090; border-left: 0; border-right-width: 2px; }
.tabs { display: flex; align-items: flex-end; height: 20px; z-index: 1; }
.tabs button { height: 18px; line-height: 17px; padding: 0 4px; border: 1px solid #8b8b8b; border-bottom-color: #d0d0d0; background: linear-gradient(#f5f5f5, #d4d4d4); }
.tabs .on { height: 21px; padding: 0 7px; margin-bottom: -1px; background: #fff; border-bottom: 0; }
.pane { flex: 1; min-height: 0; display: flex; flex-direction: column; border: 1px solid #8b8b93; background: #fff; padding: 3px 1px 2px 3px; }
.tools { height: 28px; flex: none; display: flex; align-items: center; background: #ececec; padding: 0 0 2px 3px; }
.tools button { width: 23px; display: grid; place-items: center; }
.tools .sep { width: 4px; height: 16px; }
.dim { color: #999; fill: #999; }
.up svg { transform: rotate(90deg); } .down svg { transform: rotate(-90deg); } .fwd svg { transform: rotate(180deg); }
.system { height: 18px; flex: none; display: flex; border: 1px solid #8a8f94; }
.system select { flex: 1; appearance: none; padding-left: 3px; line-height: 16px; }
.chev { width: 18px; border: 1px solid #c07a10; border-radius: 3px; background: linear-gradient(#ffd98a, #f79a1c); }
.chev svg { width: 14px; height: 14px; margin: auto; }
.treebox { flex: 1; min-height: 0; display: flex; margin-top: 2px; border: 1px solid #8a8f94; border-bottom: 0; overflow: hidden; }
.tree { flex: 1; min-width: 0; overflow: hidden; margin-top: -1px; }
.tree li { height: 18px; display: flex; align-items: center; white-space: nowrap; }
.tree i { width: 19px; height: 18px; flex: none; display: grid; place-items: center; }
.tree .v, .tree .t { background: repeating-linear-gradient(#999 0 1px, transparent 1px 2px) 9px 0 / 1px 18px no-repeat; }
.tree .t { background: repeating-linear-gradient(#999 0 1px, transparent 1px 2px) 9px 0 / 1px 18px no-repeat, repeating-linear-gradient(90deg, #999 0 1px, transparent 1px 2px) 9px 9px / 10px 1px no-repeat; }
.tree .l { background: repeating-linear-gradient(#999 0 1px, transparent 1px 2px) 9px 0 / 1px 9px no-repeat, repeating-linear-gradient(90deg, #999 0 1px, transparent 1px 2px) 9px 9px / 10px 1px no-repeat; }
.tree b { width: 9px; height: 9px; border: 1px solid #888; background: #fff; line-height: 7px; text-align: center; font-size: 9px; font-feature-settings: normal; }
.tree svg.x { width: 14px; height: 14px; margin: 0 1px; }
.tree span { padding-left: 4px; }
.sel span { flex: 1; height: 18px; margin-left: 3px; line-height: 16px; border: 1px solid #555; background: #a09da3; }
.sel .x + span { padding-left: 0; }

.scroll { width: 17px; flex: none; display: flex; flex-direction: column; background: #f6f6f6; }
.scroll button, .resize { width: 17px; height: 17px; flex: none; background: #f0f0f0; border: 1px solid #fff; border-right-color: #777; border-bottom-color: #777; }
.su::before, .sd::before { content: ""; display: block; width: 0; margin: auto; border: 4px solid transparent; }
.su::before { border-bottom-color: #000; border-top: 0; } .sd::before { border-top-color: #000; border-bottom: 0; }
.thumb { flex: 90; background: #f0f0f0; border-right: 1px solid #888; border-bottom: 1px solid #888; }
.before { flex: 228; } .after { flex: 49; }
.r .before { flex: 171; } .r .thumb { flex: 235; border-left: 1px solid #ddd; border-top: 1px solid #ddd; border-right: 2px solid #777; } .r .after { flex: 86; }
.treebox .scroll { margin-bottom: 4px; }
.hsplit { height: 9px; flex: none; display: flex; justify-content: center; }
.hsplit i { width: 161px; border: 1px solid #999; border-radius: 3px; background: linear-gradient(#fff, #a9cbdc 60%, #7f9fb0); }
.hsplit svg { width: 8px; height: 6px; margin: auto; }
.example { height: 127px; flex: none; border: 1px solid #7d868e; }
.example h2 { height: 16px; display: flex; justify-content: center; gap: 48px; background: linear-gradient(#fff 40%, #eef0f2); }

.vsplit { width: 13px; flex: none; display: flex; align-items: center; padding-left: 4px; border-left: 1px solid #fff; }
.vsplit i { width: 8px; height: 246px; display: grid; place-items: center; border: 1px solid #999; border-radius: 3px; background: linear-gradient(90deg, #fff, #a9cbdc 60%, #7f9fb0); }
.vsplit svg { width: 6px; height: 8px; }

.right { flex: 1; min-width: 0; display: flex; flex-direction: column; padding: 2px 0 1px 3px; border-left: 1px solid #909090; border-top: 1px solid #909090; background: #fff; }
.rows { flex: none; border: 1px solid #a0a0a0; background: #ececec; }
.row { display: flex; align-items: center; height: 24px; padding-left: 2px; border-bottom: 1px solid #a0a0a0; white-space: nowrap; }
.row.c { height: 25px; border: 0; }
.row > button { width: 26px; height: 21px; flex: none; display: flex; align-items: center; justify-content: center; }
.row.b > button { width: 25px; }
.row > button.drop { width: 17px; }
.row > .on { border: 1px solid #999; border-right-color: #fff; border-bottom-color: #fff; background: #f8f8f8; }
.row .sep { width: 7px; height: 18px; } .row .sep.s { width: 3px; }
.grip { width: 3px; height: 19px; flex: none; margin-right: 5px; border: 1px solid #fff; border-right-color: #999; }
.combo { height: 20px; flex: none; display: flex; align-items: center; border: 1px solid #999; background: #fff; }
.combo select { flex: 1; min-width: 0; height: 18px; appearance: none; padding-left: 2px; }
.combo::after { content: ""; width: 17px; height: 16px; flex: none; background: linear-gradient(#000, #000) center 7px / 7px 1px no-repeat, linear-gradient(#000, #000) center 8px / 5px 1px no-repeat, linear-gradient(#000, #000) center 9px / 3px 1px no-repeat, linear-gradient(#000, #000) center 10px / 1px 1px no-repeat, #f0f0f0; }
.font { width: 92px; } .size { width: 60px; } .pct { width: 68px; } .line { width: 80px; }
.line select { background: linear-gradient(#000, #000) 5px 8px / 53px 1px no-repeat; }
.tt { width: 17px; text-align: center; font-family: "Liberation Serif", serif; font-size: 13px; }
.tt small { font-size: 9px; }
.tx { font-family: "Liberation Serif", serif; font-size: 15px; font-weight: bold; }
.fc { border-bottom: 3px solid #f00; line-height: 12px; }
.sup { font-family: "Liberation Serif", serif; font-size: 16px; color: #16589a; font-feature-settings: normal; }
.frac span { width: 17px; height: 17px; border: 1px solid #000; border-radius: 9px; font-size: 9px; line-height: 15px; text-align: center; }
.row.c > button { justify-content: flex-start; }
.row.c > .w1 { width: 79px; padding-left: 5px; } .row.c > .w2 { width: 76px; } .row.c > .w3 { width: 73px; } .row.c > .w4 { width: 70px; }
.row.c > .drop { justify-content: center; }
.nums { display: flex; width: 16px; font-size: 9px; line-height: 12px; margin-right: 1px; }
.nums sup { line-height: 8px; } .nums sub { line-height: 18px; }
.nums sup, .nums sub { font-size: 9px; vertical-align: baseline; }
.no { font-family: "Liberation Serif", serif; width: 17px; }

.book { flex: 1; min-height: 0; display: flex; flex-direction: column; border: 1px solid #666; background: #f0f0f0; }
.sheetrow { flex: 1; min-height: 0; display: flex; overflow: hidden; }
.sheet { flex: 1; min-width: 0; position: relative; overflow: hidden; }
table { width: 739px; table-layout: fixed; border-collapse: separate; border-spacing: 0; font-size: 13px; line-height: 13px; }
.rh { width: 33px; } .gap { width: 4px; } .c { width: 26px; }
td, th { padding: 0; text-align: center; white-space: nowrap; }
td { background: #fff; border-right: 1px solid #000; border-bottom: 1px solid #000; }
th { font-weight: normal; font-size: 12px; background: #f0f0f0; border-right: 1px solid #a0a0a0; border-bottom: 1px solid #a0a0a0; }
thead th { height: 19px; border-right-color: #bbb5a4; font-family: "Liberation Serif", serif; font-size: 13px; }
thead .k { border-bottom-color: #000; }
.k { font-weight: bold; }
.corner svg { width: 12px; height: 12px; margin: 4px 1px 0 auto; }
td.gp, th.gp { background: #e0e0e0; border: 0; }
td.edge { background: #e0e0e0; border: 0; border-right: 2px solid #000; }
td.g { background: #e0e0e0; }
td.last { border-right-width: 2px; }
.h39 { height: 39px; } .h72 { height: 72px; } .h49 { height: 49px; }
td.avg { text-align: right; padding-right: 2px; border-right-color: #eee; }
td.nb { border-right-color: #fff; }
td.unit { text-align: left; padding-left: 4px; }
td.cur { outline: 1px solid #000; outline-offset: 1px; box-shadow: 0 0 0 1px #fff; position: relative; }
td.end { border-bottom-width: 2px; }
.vert { writing-mode: vertical-rl; }
.foot { height: 10px; }
.foot td { border: 0; border-right: 1px solid #fff; }
.foot td.f1 { background: #e0e0e0; } .foot td.f2 { background: #f2c9a4; }
.note { position: absolute; left: 226px; top: 315px; width: 100px; height: 124px; }
.ask { position: absolute; left: 374px; top: 339px; font-size: 21px; line-height: 30px; color: #ff2014; white-space: nowrap; }
.handle { position: absolute; left: 736px; top: 420px; width: 6px; height: 6px; border: 1px solid #000; background: #fff; }
.pages { height: 18px; flex: none; display: flex; border-top: 1px solid #999; }
.pages button { width: 17px; height: 16px; background: #f0f0f0; border-right: 1px solid #999; border-bottom: 1px solid #999; }
.pages .ptab { position: relative; width: 58px; border: 0; margin-left: 1px; background: none; }
.ptab svg { position: absolute; left: 0; top: 0; width: 58px; height: 17px; }
.ptab span { position: relative; }
.pages .resize { margin-left: auto; }
.frame { width: 9px; flex: none; background: linear-gradient(90deg, #fff 1px, #999 1px 2px, #e0e0e0 2px 4px, #b8d0ec 4px); }

.status { height: 18px; flex: none; display: flex; gap: 2px; border-top: 1px solid #a0a0a0; border-bottom: 2px solid #4a5f78; overflow: hidden; white-space: nowrap; line-height: 20px; }
.status span { border: 1px solid #a8a8a8; border-bottom: 0; border-right-color: #c8c8c8; height: 20px; }
.s1 { width: 276px; padding-left: 1px; } .s2 { width: 126px; padding-left: 3px; } .s3 { width: 131px; padding-left: 3px; } .s4 { width: 98px; } .s5 { flex: 1; text-align: center; color: #1e90ff; } .s6 { width: 197px; text-align: right; padding-right: 2px; }
.ball { position: absolute; left: 1347px; top: 368px; width: 46px; height: 46px; border: 2px solid #ddd; border-radius: 23px; background: radial-gradient(circle at 50% 20%, #9be89b, #3cc45a 60%); box-shadow: 0 0 2px #444, inset 0 0 0 1px #17783a; color: #fff; font-weight: bold; line-height: 42px; padding-left: 3px; }
```
